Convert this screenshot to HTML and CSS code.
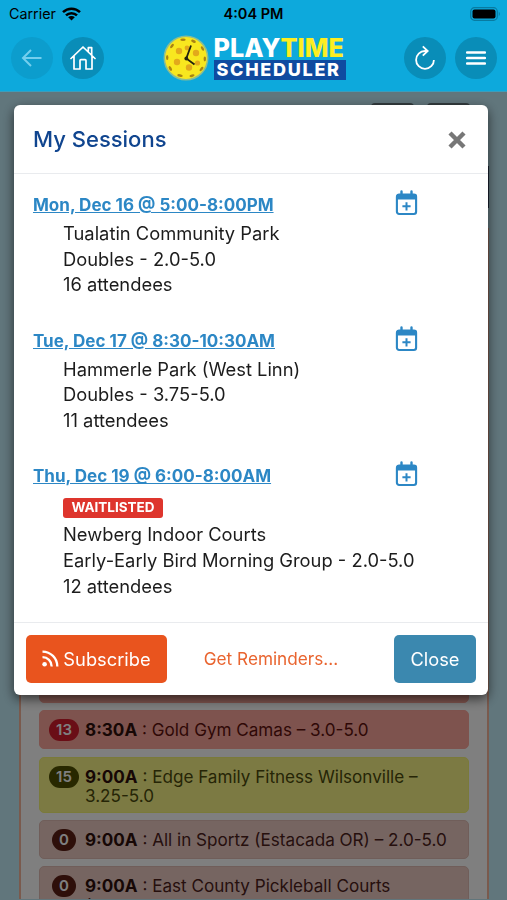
FILE: index.html
```html
<!DOCTYPE html>
<html lang="en">
<head>
    <meta charset="UTF-8">
    <meta name="viewport" content="width=device-width, initial-scale=1.0">
    <title>My Sessions</title>
    <link rel="stylesheet" href="styles.css">
</head>
<body>
    <svg class="sprite" width="0" height="0">
        <symbol id="calendar-plus" viewBox="0 0 23 26">
            <path d="M6.5 1.5v4M16.5 1.5v4" stroke="currentColor" stroke-width="2.4" stroke-linecap="round"/>
            <rect x="1.9" y="4.6" width="19.2" height="19.4" rx="2.2" fill="none" stroke="currentColor" stroke-width="2.1"/>
            <path d="M1.5 5.5q0-1.5 1.5-1.5h17q1.5 0 1.5 1.5v4h-20z" fill="currentColor"/>
            <path d="M11.5 12.2v8.2M7.4 16.3h8.2" stroke="currentColor" stroke-width="2"/>
        </symbol>
    </svg>

    <header>
        <div class="status-bar">
            <div class="carrier">
                <span>Carrier</span>
                <svg width="19" height="14" viewBox="0 0 19 14">
                    <g fill="none" stroke="#000" stroke-width="2.5">
                        <path d="M1 5.2a12.2 12.2 0 0 1 17 0"/>
                        <path d="M4 8.4a7.8 7.8 0 0 1 11 0"/>
                    </g>
                    <path d="M6.2 10.3a4.7 4.7 0 0 1 6.6 0L9.5 13.6z"/>
                </svg>
            </div>
            <span class="time">4:04 PM</span>
            <svg class="battery" width="31" height="14" viewBox="0 0 31 14">
                <rect x=".7" y=".7" width="26.6" height="12.6" rx="3.8" fill="none" stroke="#087ba1" stroke-width="1.2"/>
                <rect x="2.5" y="2.5" width="23" height="9" rx="2"/>
                <path d="M28.8 4.8q2 2.2 0 4.4z" fill="#087ba1"/>
            </svg>
        </div>
        <nav>
            <div class="nav-group">
                <a class="nav-btn disabled" href="#">
                    <svg width="22" height="20" viewBox="0 0 22 20"><path d="M20.5 10H2M10 2l-8 8 8 8" fill="none" stroke="#74cfee" stroke-width="2"/></svg>
                </a>
                <a class="nav-btn" href="#">
                    <svg width="26" height="26" viewBox="0 0 26 26"><path d="M1 13.5 13 2l12 11.5M4 11v13h6v-8.5q0-.9.9-.9h4.2q.9 0 .9.9V24h6V11M18.3 6.8V2.6h3.4v7.5" fill="none" stroke="#fff" stroke-width="1.7" stroke-linejoin="round" stroke-linecap="round"/></svg>
                </a>
            </div>
            <div class="logo">
                <svg width="46" height="46" viewBox="0 0 46 46">
                    <circle cx="23" cy="23" r="21.7" fill="#f8e71f" stroke="#8dbd91" stroke-width="1.6"/>
                    <g fill="#e2a91b">
                        <circle cx="16" cy="16" r="3.2"/><circle cx="33" cy="18" r="3.2"/>
                        <circle cx="14" cy="27" r="3.2"/><circle cx="26" cy="32.5" r="3.2"/>
                        <circle cx="34.5" cy="28" r="2.6"/><circle cx="24" cy="13" r="2.4"/>
                    </g>
                    <g fill="#a98413">
                        <ellipse cx="20" cy="4.8" rx="2.7" ry="1.3"/><ellipse cx="30.5" cy="6.3" rx="2.5" ry="1.3" transform="rotate(25 30.5 6.3)"/>
                        <ellipse cx="9" cy="11" rx="2.5" ry="1.3" transform="rotate(-50 9 11)"/><ellipse cx="4.2" cy="22.5" rx="1.2" ry="2.5"/>
                        <ellipse cx="7.3" cy="33.5" rx="1.3" ry="2.6" transform="rotate(-30 7.3 33.5)"/><ellipse cx="17" cy="40.5" rx="2.8" ry="1.4" transform="rotate(12 17 40.5)"/>
                        <ellipse cx="29" cy="40.7" rx="2.6" ry="1.3" transform="rotate(-15 29 40.7)"/><ellipse cx="38.5" cy="34" rx="1.3" ry="2.6" transform="rotate(40 38.5 34)"/>
                        <ellipse cx="41.8" cy="24" rx="1.2" ry="2.4"/><ellipse cx="39.5" cy="13.5" rx="1.3" ry="2.5" transform="rotate(-28 39.5 13.5)"/>
                    </g>
                    <path d="M28 10.5 23.3 23.5 31.5 29.5" fill="none" stroke="#22220f" stroke-width="1.8"/>
                    <circle cx="23.3" cy="23.5" r="1.9" fill="#22220f"/>
                </svg>
                <div class="logo-text">
                    <div class="logo-top">PLAY<span>TIME</span></div>
                    <div class="logo-bottom">SCHEDULER</div>
                </div>
            </div>
            <div class="nav-group">
                <a class="nav-btn" href="#">
                    <svg width="22" height="26" viewBox="0 0 22 26"><path d="M12.5 6H11a8.9 8.9 0 1 0 8.9 8.9M8.8 1.3 13.7 6 8.8 10.7" fill="none" stroke="#fff" stroke-width="1.8"/></svg>
                </a>
                <a class="nav-btn" href="#">
                    <svg width="20" height="16" viewBox="0 0 20 16"><path d="M1 2.5h18M1 8h18M1 13.5h18" stroke="#fff" stroke-width="2.3" stroke-linecap="round"/></svg>
                </a>
            </div>
        </nav>
    </header>

    <main>
        <div class="toolbar">
            <span></span>
            <span></span>
        </div>
        <div class="day-bar"></div>
        <section class="schedule">
            <div class="game full"></div>
            <div class="game full">
                <span class="count-col"><span class="count">13</span></span>
                <p><b>8:30A</b> : Gold Gym Camas – 3.0-5.0</p>
            </div>
            <div class="game joined">
                <span class="count-col"><span class="count">15</span></span>
                <p><b>9:00A</b> : Edge Family Fitness Wilsonville – 3.25-5.0</p>
            </div>
            <div class="game">
                <span class="count-col"><span class="count">0</span></span>
                <p><b>9:00A</b> : All in Sportz (Estacada OR) – 2.0-5.0</p>
            </div>
            <div class="game">
                <span class="count-col"><span class="count">0</span></span>
                <p><b>9:00A</b> : East County Pickleball Courts<br>(Troutdale) – 2.0-5.0 – "Open Play – All</p>
            </div>
        </section>
    </main>

    <div class="backdrop">
        <div class="modal">
            <div class="modal-header">
                <h2>My Sessions</h2>
                <svg width="18" height="18" viewBox="0 0 18 18"><path d="M2 2l14 14M16 2 2 16" stroke="#777" stroke-width="4.4"/></svg>
            </div>
            <div class="modal-body">
                <div class="session">
                    <div class="session-title">
                        <a href="#">Mon, Dec 16 @ 5:00-8:00PM</a>
                        <svg width="23" height="26"><use href="#calendar-plus"/></svg>
                    </div>
                    <div class="details">
                        <p>Tualatin Community Park</p>
                        <p>Doubles - 2.0-5.0</p>
                        <p>16 attendees</p>
                    </div>
                </div>
                <div class="session">
                    <div class="session-title">
                        <a href="#">Tue, Dec 17 @ 8:30-10:30AM</a>
                        <svg width="23" height="26"><use href="#calendar-plus"/></svg>
                    </div>
                    <div class="details">
                        <p>Hammerle Park (West Linn)</p>
                        <p>Doubles - 3.75-5.0</p>
                        <p>11 attendees</p>
                    </div>
                </div>
                <div class="session">
                    <div class="session-title">
                        <a href="#">Thu, Dec 19 @ 6:00-8:00AM</a>
                        <svg width="23" height="26"><use href="#calendar-plus"/></svg>
                    </div>
                    <div class="details">
                        <span class="badge">WAITLISTED</span>
                        <p>Newberg Indoor Courts</p>
                        <p>Early-Early Bird Morning Group - 2.0-5.0</p>
                        <p>12 attendees</p>
                    </div>
                </div>
            </div>
            <div class="modal-footer">
                <button class="btn subscribe">
                    <svg width="17" height="17" viewBox="0 0 17 17">
                        <circle cx="2.6" cy="14.2" r="2.3" fill="#fff"/>
                        <path d="M.5 7.2a9.2 9.2 0 0 1 9.2 9.2M.5 1.6A14.8 14.8 0 0 1 15.3 16.4" fill="none" stroke="#fff" stroke-width="2.3"/>
                    </svg>
                    Subscribe
                </button>
                <a class="reminders" href="#">Get Reminders...</a>
                <button class="btn close">Close</button>
            </div>
        </div>
    </div>
</body>
</html>
```

FILE: styles.css
```css
/* General Styles */
* {
    box-sizing: border-box;
}

body {
    font-family: Inter, 'Liberation Sans', sans-serif;
    margin: 0;
    height: 900px;
    overflow: hidden;
    display: flex;
    flex-direction: column;
    background: #c3ecf8;
}

p, h2 {
    margin: 0;
}

svg {
    display: block;
    flex: none;
}

.sprite {
    position: absolute;
}

/* Header */
header {
    height: 92px;
    flex: none;
    background-color: #0da9dc;
    border-bottom: 1px solid #3c9dbb;
}

.status-bar {
    height: 27px;
    padding: 0 6px 0 9px;
    display: grid;
    grid-template-columns: 1fr auto 1fr;
    align-items: center;
    font-size: 14.3px;
}

.carrier {
    display: flex;
    align-items: center;
    gap: 6px;
}

.time {
    font-weight: 600;
    font-size: 14.5px;
    margin-right: 3px;
}

.battery {
    justify-self: end;
}

nav {
    display: flex;
    justify-content: space-between;
    align-items: center;
    padding: 8px 10px 0 11px;
}

.nav-group {
    display: flex;
    gap: 9px;
}

.nav-btn {
    width: 42px;
    height: 42px;
    border-radius: 50%;
    background-color: #098db8;
    display: flex;
    align-items: center;
    justify-content: center;
}

.nav-btn.disabled {
    background-color: #0c9dcd;
}

.logo {
    display: flex;
    align-items: center;
    gap: 5px;
}

.logo-text {
    width: 132px;
    font-weight: 800;
    color: white;
    white-space: nowrap;
}

.logo-top {
    font-size: 25.2px;
    line-height: 24px;
}

.logo-top span {
    color: #fdee21;
}

.logo-bottom {
    height: 20px;
    background-color: #0f4ba0;
    font-size: 18px;
    line-height: 20px;
    letter-spacing: 1.7px;
    padding-left: 3px;
}

/* Schedule page */
main {
    padding: 11px 18px 0 19px;
}

.toolbar {
    display: flex;
    justify-content: flex-end;
    gap: 13px;
    padding-right: 19px;
}

.toolbar span {
    width: 43px;
    height: 36px;
    border-radius: 4px;
    background-color: #66777c;
}

.day-bar {
    height: 42px;
    margin: 27px 0 20px;
    background-color: #34405c;
}

.schedule {
    height: 671px;
    overflow: hidden;
    padding: 434px 18px 0;
    border: 2px solid #f4b49b;
    border-bottom: none;
    background-color: white;
}

.game {
    display: flex;
    align-items: flex-start;
    min-height: 39px;
    margin-bottom: 7.3px;
    padding: 9px 8px 7px 9px;
    border: 1px solid #e0bdb4;
    border-radius: 5px;
    background-color: #eccbc3;
    color: #4d211b;
    font-size: 17.1px;
    line-height: 19.5px;
}

.game b {
    color: #2e0f0b;
}

.count-col {
    display: flex;
    justify-content: center;
    width: 30px;
    height: 20px;
    margin-right: 6px;
    flex: none;
}

.count {
    min-width: 24px;
    height: 22px;
    margin-top: -1px;
    padding: 0 7px;
    border-radius: 11px;
    background-color: #5c1e14;
    color: white;
    font-size: 15px;
    font-weight: 600;
    line-height: 22px;
    text-align: center;
}

.game.full {
    background-color: #fca79c;
    border-color: #fca79c;
    color: #5e100c;
}

.game.full .count {
    background-color: #d41c2c;
}

.game.joined {
    padding-bottom: 6px;
    background-color: #f8f586;
    border-color: #f4f475;
    color: #4c4a0c;
}

.game.joined .count {
    background-color: #505000;
}

/* Modal */
.backdrop {
    position: fixed;
    top: 92px;
    left: 0;
    right: 0;
    bottom: 0;
    padding: 13px 19px 0 14px;
    background-color: rgba(0, 0, 0, 0.5);
}

.modal {
    height: 590px;
    width: 474px;
    display: flex;
    flex-direction: column;
    border-radius: 6px;
    background-color: white;
    box-shadow: 0 4px 12px rgba(0, 0, 0, 0.6);
}

.modal-header {
    height: 69px;
    display: flex;
    align-items: center;
    justify-content: space-between;
    padding: 0 22px 0 19px;
    border-bottom: 1px solid #e9ebee;
}

.modal-header svg {
    margin-top: 2px;
}

.modal-header h2 {
    font-size: 22px;
    font-weight: 500;
    color: #10458f;
}

.modal-body {
    flex: 1;
    padding: 16px 19px 0;
}

.session {
    height: 135.7px;
}

.session-title {
    display: flex;
    justify-content: space-between;
    height: 31px;
    padding-right: 51px;
    color: #2c87c5;
}

.session-title a {
    color: #2c87c5;
    font-size: 17.05px;
    font-weight: 700;
    line-height: 30px;
}

.details {
    padding-left: 30px;
    color: #1c1c1c;
    font-size: 18.35px;
    line-height: 25.7px;
}

.badge {
    display: block;
    width: 100px;
    height: 20px;
    margin: 6px 0 4px;
    border-radius: 3px;
    background-color: #de352d;
    color: white;
    font-size: 13.5px;
    font-weight: 700;
    line-height: 19px;
    text-align: center;
}

.modal-footer {
    height: 73px;
    display: flex;
    align-items: center;
    justify-content: space-between;
    padding: 0 12px 1px;
    border-top: 1px solid #e9ebee;
}

.btn {
    height: 48px;
    padding: 0;
    border: none;
    border-radius: 5px;
    color: white;
    font-family: inherit;
    font-size: 18.3px;
    display: flex;
    align-items: center;
    justify-content: center;
}

.subscribe {
    width: 141px;
    gap: 4px;
    background-color: #e9541e;
}

.close {
    width: 82px;
    background-color: #3b88af;
}

.reminders {
    color: #e9642f;
    font-size: 17.2px;
    text-decoration: none;
    margin-left: -19px;
}
```
